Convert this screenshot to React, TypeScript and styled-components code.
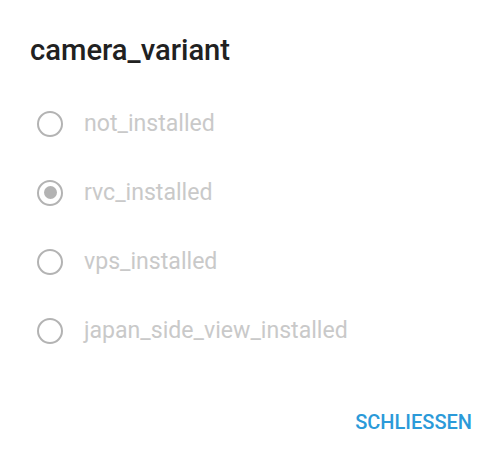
import React, { useState } from 'react'
import styled, { createGlobalStyle } from 'styled-components'

const GlobalStyle = createGlobalStyle`
    html, body {
        margin: 0;
        padding: 0;
        background: #fff;
        font-family: Roboto, 'Noto Sans', sans-serif;
    }
`

const options = ['not_installed', 'rvc_installed', 'vps_installed', 'japan_side_view_installed']

const App: React.FC = () => {
    const [selected] = useState('rvc_installed')

    return (
        <>
            <GlobalStyle />
            <Dialog>
                <Title>camera_variant</Title>
                <List>
                    {options.map((opt) => (
                        <Row key={opt}>
                            <Radio checked={opt === selected} />
                            <Label>{opt}</Label>
                        </Row>
                    ))}
                </List>
                <Actions>
                    <TextButton>SCHLIESSEN</TextButton>
                </Actions>
            </Dialog>
        </>
    )
}

const Dialog = styled.div`
    width: 500px;
    height: 465px;
    box-sizing: border-box;
    padding: 34px 0 0;
    display: flex;
    flex-direction: column;
`

const Title = styled.h1`
    margin: 0 0 0 30px;
    font-size: 29.2px;
    font-weight: 500;
    line-height: 32px;
    color: #212121;
`

const List = styled.div`
    margin-top: 33px;
    display: flex;
    flex-direction: column;
    gap: 20px;
`

const Row = styled.div`
    height: 49px;
    display: flex;
    align-items: center;
    padding-left: 37px;
    gap: 21px;
`

const Radio = styled.span<{ checked: boolean }>`
    width: 26px;
    height: 26px;
    flex-shrink: 0;
    box-sizing: border-box;
    border: 2.5px solid #b3b3b3;
    border-radius: 50%;
    display: flex;
    align-items: center;
    justify-content: center;
    &::after {
        content: '';
        display: ${(p) => (p.checked ? 'block' : 'none')};
        width: 13px;
        height: 13px;
        border-radius: 50%;
        background: #b3b3b3;
    }
`

const Label = styled.span`
    font-size: 23.1px;
    color: #c9c9c9;
`

const Actions = styled.div`
    margin-top: auto;
    padding: 0 28px 31px 0;
    display: flex;
    justify-content: flex-end;
`

const TextButton = styled.button`
    border: none;
    background: none;
    padding: 0;
    font-family: Roboto, sans-serif;
    font-size: 20px;
    font-weight: 500;
    color: #2b9ad9;
    cursor: pointer;
`

export default App
